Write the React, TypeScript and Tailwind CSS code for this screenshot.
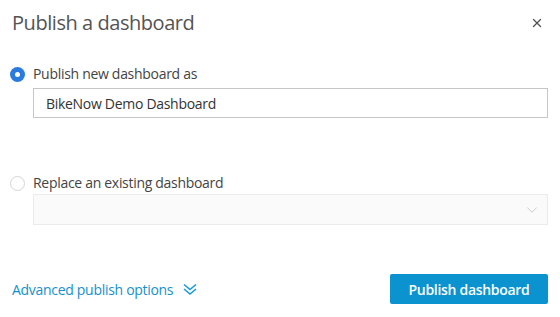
import { X, ChevronDown } from 'lucide-react'

const font = { fontFamily: '"Open Sans", "Noto Sans", Arial, sans-serif' }

function Radio({ checked }: { checked?: boolean }) {
  return checked ? (
    <span className="flex h-[15px] w-[15px] shrink-0 items-center justify-center rounded-full bg-[#2a7bdf]">
      <span className="h-[5px] w-[5px] rounded-full bg-white" />
    </span>
  ) : (
    <span className="h-[15px] w-[15px] shrink-0 rounded-full border border-[#d5d5d5] bg-white" />
  )
}

export default function App() {
  return (
    <div
      className="flex h-[317px] w-[560px] flex-col bg-white text-[#444]"
      style={font}
    >
      {/* header */}
      <div className="flex items-center justify-between pl-[12px] pr-[16px] pt-[9px]">
        <h1 className="text-[20px] leading-[28px] tracking-[-0.45px] text-[#545454]">
          Publish a dashboard
        </h1>
        <X size={14} strokeWidth={2.4} className="text-[#545454]" />
      </div>

      {/* options */}
      <div className="mt-[28px] flex flex-col pl-[10px] pr-[12px] tracking-[-0.3px]">
        <label className="flex items-center gap-[8px]">
          <Radio checked />
          <span className="text-[14px] leading-[18px] text-[#444]">
            Publish new dashboard as
          </span>
        </label>
        <div className="ml-[23px] mt-[5px] flex h-[30px] items-center border border-[#c6c6c6] px-[12px] text-[14px] text-[#333]">
          BikeNow Demo Dashboard
        </div>

        <label className="mt-[56px] flex items-center gap-[8px]">
          <Radio />
          <span className="text-[14px] leading-[18px] text-[#444]">
            Replace an existing dashboard
          </span>
        </label>
        <div className="ml-[23px] mt-[2px] flex h-[31px] items-center justify-end border border-[#ebebeb] bg-[#fafafa] pr-[6px]">
          <ChevronDown size={18} strokeWidth={1} className="text-[#bbb]" />
        </div>
      </div>

      {/* footer */}
      <div className="mt-auto mb-[13px] flex items-center justify-between pl-[12px] pr-[12px] tracking-[-0.3px]">
        <button className="flex items-center gap-[10px] text-[14px] text-[#1590cf]">
          Advanced publish options
          <svg width="14" height="13" viewBox="0 0 14 13" fill="none" stroke="#1a9ad6" strokeWidth="1.6">
            <path d="M1 1.5l6 5 6-5" />
            <path d="M1 6l6 5 6-5" />
          </svg>
        </button>
        <button className="h-[30px] w-[158px] rounded-[2px] bg-[#0a93cf] text-[14px] font-semibold text-white">
          Publish dashboard
        </button>
      </div>
    </div>
  )
}
